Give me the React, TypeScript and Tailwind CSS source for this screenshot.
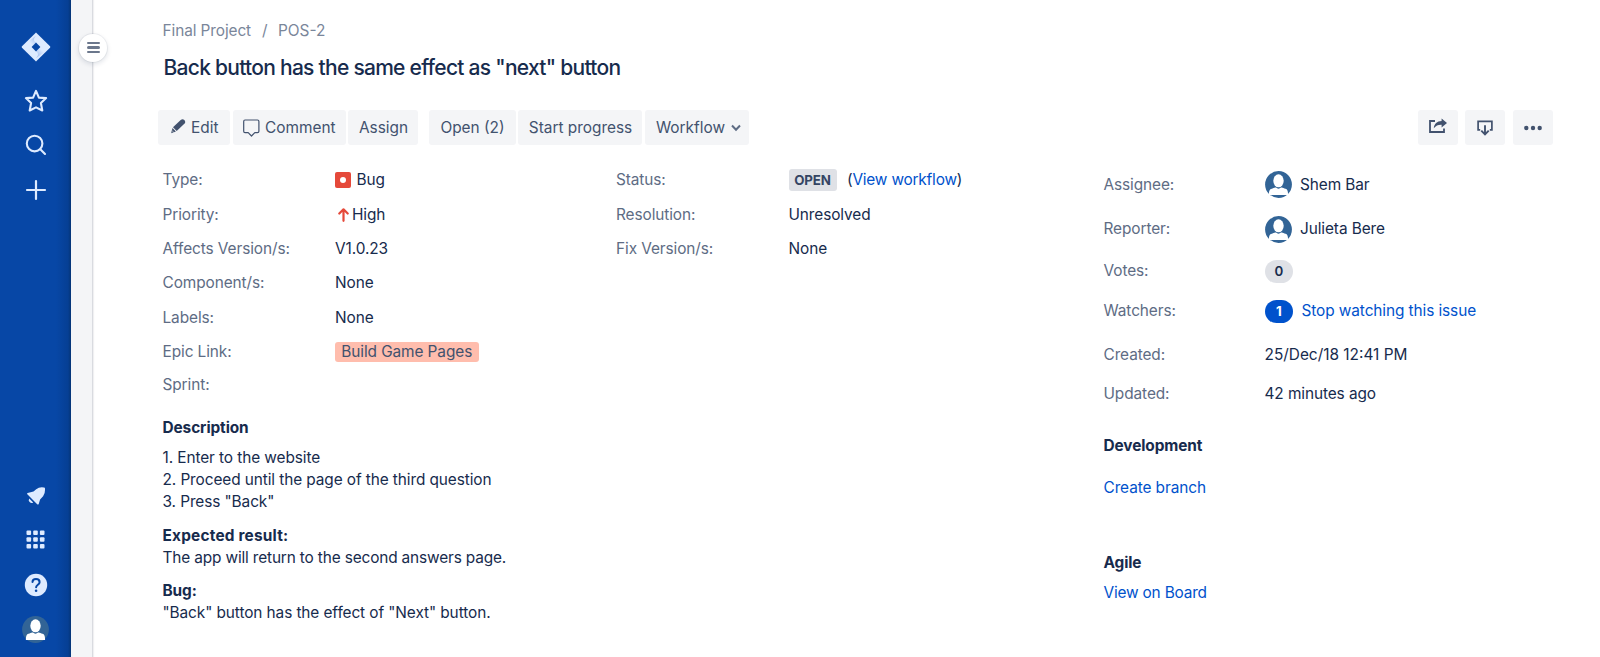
import type { ReactNode } from "react";

function JiraLogo() {
  return (
    <svg width="30" height="30" viewBox="0 0 30 30">
      <defs>
        <linearGradient id="upper" x1="17" y1="4" x2="9" y2="11" gradientUnits="userSpaceOnUse">
          <stop offset="0.15" stopColor="#9fbbec" />
          <stop offset="1" stopColor="#deebff" />
        </linearGradient>
        <linearGradient id="lower" x1="14" y1="26" x2="21" y2="18" gradientUnits="userSpaceOnUse">
          <stop offset="0.15" stopColor="#9fbbec" />
          <stop offset="1" stopColor="#deebff" />
        </linearGradient>
      </defs>
      <path d="M15 .5 29 14.2q.8.8 0 1.6L15 29.5 1 15.8q-.8-.8 0-1.6Z" fill="#deebff" />
      <path d="M15.300 3.500c-3 3-3 5.300-.3 7.300L9 16.800 6 10.500Z" fill="url(#upper)" />
      <path d="M14.700 26.500c3-3 3-5.300.3-7.300L21 13.200 24 19.500Z" fill="url(#lower)" />
      <path d="M15 10.600 10.600 15 15 19.400 19.400 15Z" fill="#0747a6" />
    </svg>
  );
}

function StarIcon() {
  return (
    <svg width="26" height="26" viewBox="0 0 26 26" fill="none" stroke="#deebff" strokeWidth="2.1" strokeLinejoin="round">
      <path d="M13 2.900 15.900 9.600 23.100 10.100 17.900 15 19.300 22.500 13 19.400 6.700 22.500 8.100 15 2.900 10.100 10.100 9.600Z" />
    </svg>
  );
}

function SearchIcon() {
  return (
    <svg width="22" height="22" viewBox="0 0 22 22" fill="none" stroke="#deebff" strokeWidth="2.1" strokeLinecap="round">
      <circle cx="9.600" cy="9.600" r="7.800" />
      <path d="m15.300 15.300 4.700 4.700" />
    </svg>
  );
}

function PlusIcon() {
  return (
    <svg width="22" height="22" viewBox="0 0 22 22" fill="none" stroke="#deebff" strokeWidth="2.2" strokeLinecap="round">
      <path d="M11 2v18M2 11h18" />
    </svg>
  );
}

function BellIcon() {
  return (
    <svg width="20" height="20" viewBox="0 0 20 20" fill="#deebff">
      <path d="M1.300 8.300 11.200 18.300q1 .8 1.500-.4l1.400-4.300 3-3.300q2-2.500 1.900-6.300V2.600q0-1-1-1.100-4.500-.9-7.800 1.700L7.500 5.500 1.600 7q-1 .5-.3 1.300Z" />
      <path d="M3.200 12.500 7.200 16.500A2.900 2.900 0 0 1 3.200 12.500Z" />
    </svg>
  );
}

function GridIcon() {
  return (
    <svg width="19" height="19" viewBox="0 0 19 19" fill="#deebff">
      {[0.5, 7.2, 13.9].map((y) =>
        [0.5, 7.2, 13.9].map((x) => <rect key={`${x}-${y}`} x={x} y={y} width="4.600" height="4.600" rx="1" />),
      )}
    </svg>
  );
}

function HelpIcon() {
  return (
    <svg width="24" height="24" viewBox="0 0 24 24" fill="none">
      <circle cx="12" cy="12" r="11.200" fill="#deebff" />
      <path d="M8.500 9.100C8.500 7 10.100 6 12 6s3.600 1.200 3.600 3.200c0 2.400-3.500 2.600-3.500 5" stroke="#0747a6" strokeWidth="2" strokeLinecap="round" />
      <circle cx="12.100" cy="17.800" r="1.300" fill="#0747a6" />
    </svg>
  );
}

function Avatar() {
  return (
    <svg width="27" height="27" viewBox="0 0 27 27" className="shrink-0">
      <circle cx="13.500" cy="13.500" r="13.400" fill="#326496" />
      <ellipse cx="13.500" cy="9.800" rx="5.200" ry="6.500" fill="#fff" />
      <path d="M3.900 24.100c0-4.500.8-6.300 3.600-6.700 1.600-.3 2.400-.8 3.300-.8.9 0 1.300 1.200 2.700 1.200s1.800-1.200 2.700-1.200c.9 0 1.700.5 3.300.8 2.800.4 3.600 2.200 3.600 6.700Z" fill="#fff" />
    </svg>
  );
}

function PencilIcon() {
  return (
    <svg width="15" height="15" viewBox="0 0 15 15" fill="#42526e">
      <path d="M9.700 1.100q1.900-1.600 3.600 0t.3 3.400L5.700 12 2 8.300Z" />
      <path d="M1.500 9.100 4.900 12.600.9 14.100Q.1 14.300.3 13.500Z" />
      <path d="m1.200 11.800 1.600 1.600" stroke="#f4f5f7" strokeWidth=".7" />
    </svg>
  );
}

function CommentIcon() {
  return (
    <svg width="17" height="18" viewBox="0 0 17 18" fill="none" stroke="#42526e" strokeWidth="1.200" strokeLinejoin="round">
      <path d="M2 1h12.500q1.400 0 1.400 1.400v9.800q0 1.400-1.400 1.400h-2.700L8.500 17 5.200 13.600H2Q.7 13.600.7 12.200V2.400Q.7 1 2 1Z" />
    </svg>
  );
}

function ChevronIcon() {
  return (
    <svg width="10" height="8" viewBox="0 0 10 8" fill="none" stroke="#5e6c84" strokeWidth="2">
      <path d="M1 1.500 5 5.700 9 1.500" />
    </svg>
  );
}

function ShareIcon() {
  return (
    <svg width="18" height="16" viewBox="0 0 18 16" fill="none">
      <path d="M6 3H1v11h14v-3.500" stroke="#42526e" strokeWidth="1.800" />
      <path d="M4.800 10.300C5.200 5.800 8 3.300 12.600 3.100V.4L18 4.900 12.600 9.400V6.700C9 6.600 7 7.600 4.800 10.300Z" fill="#42526e" />
    </svg>
  );
}

function ExportIcon() {
  return (
    <svg width="16" height="16" viewBox="0 0 16 16" fill="none" stroke="#42526e" strokeWidth="1.700">
      <path d="M3.200 9.900H1.100V1.400h13.800v8.500h-2.100" />
      <path d="M8 5.200v9M4.300 10.600 8 14.300l3.700-3.700" strokeWidth="1.900" />
    </svg>
  );
}

function DotsIcon() {
  return (
    <svg width="18" height="6" viewBox="0 0 18 6" fill="#42526e">
      <circle cx="2.300" cy="3" r="2.200" />
      <circle cx="9" cy="3" r="2.200" />
      <circle cx="15.700" cy="3" r="2.200" />
    </svg>
  );
}

function BugIcon() {
  return (
    <span className="mr-[6px] flex size-[15.500px] items-center justify-center rounded-[2px] bg-[#e5493a]">
      <span className="size-[6.500px] rounded-full bg-white" />
    </span>
  );
}

function ArrowUpIcon() {
  return (
    <svg width="11" height="14" viewBox="0 0 11 14" fill="none" stroke="#e5493a" strokeWidth="2.200" strokeLinecap="round" strokeLinejoin="round" className="mr-[3.500px] ml-[2.500px]">
      <path d="M5.500 12.800V1.500M1.300 5.500 5.500 1.300l4.200 4.200" />
    </svg>
  );
}

function NavItem({ height, children }: { height: string; children: ReactNode }) {
  return <div className={`flex w-full items-center justify-center ${height}`}>{children}</div>;
}

function Sidebar() {
  return (
    <nav className="flex h-full w-[71px] shrink-0 flex-col justify-between bg-[linear-gradient(to_right,#0747a6_0,#0747a6_56px,#063f94_68px,#053576_71px)]">
      <div className="flex flex-col pt-[24px]">
        <NavItem height="h-[45px]"><JiraLogo /></NavItem>
        <NavItem height="h-[64px]"><StarIcon /></NavItem>
        <NavItem height="h-[24px]"><SearchIcon /></NavItem>
        <NavItem height="h-[66px]"><PlusIcon /></NavItem>
      </div>
      <div className="flex flex-col pb-[6px]">
        <NavItem height="h-[43px]"><BellIcon /></NavItem>
        <NavItem height="h-[45px]"><GridIcon /></NavItem>
        <NavItem height="h-[45px]"><HelpIcon /></NavItem>
        <NavItem height="h-[44px]"><Avatar /></NavItem>
      </div>
    </nav>
  );
}

function Button({ width, children }: { width: string; children: ReactNode }) {
  return (
    <button className={`flex h-[35px] shrink-0 items-center justify-center rounded-[3px] bg-[#f4f5f7] whitespace-nowrap text-[#42526e] ${width}`}>
      {children}
    </button>
  );
}

function Toolbar() {
  return (
    <div className="flex w-[1395px] justify-between tracking-normal">
      <div className="flex gap-[2.500px]">
        <Button width="w-[72px] pl-[1.500px]"><span className="mr-[5px] mb-[3px]"><PencilIcon /></span>Edit</Button>
        <Button width="w-[113px] pl-px"><span className="mt-px mr-[4.500px]"><CommentIcon /></span>Comment</Button>
        <Button width="w-[70px] mr-[8px] pl-px">Assign</Button>
        <Button width="w-[87px] pl-px">Open (2)</Button>
        <Button width="w-[124px] pl-px">Start progress</Button>
        <Button width="w-[104.500px] pl-[3px]">Workflow<span className="ml-[5.500px]"><ChevronIcon /></span></Button>
      </div>
      <div className="flex">
        <Button width="w-[40px] mr-[6.500px] pb-[3px]"><ShareIcon /></Button>
        <Button width="w-[40px] mr-[8.500px]"><ExportIcon /></Button>
        <Button width="w-[40px]"><DotsIcon /></Button>
      </div>
    </div>
  );
}

function Row({ label, height = "h-[34.400px]", labelWidth = "w-[172.500px]", children }: { label: string; height?: string; labelWidth?: string; children?: ReactNode }) {
  return (
    <div className={`flex items-center ${height}`}>
      <dt className={`shrink-0 text-[#5e6c84] ${labelWidth}`}>{label}</dt>
      <dd className="flex items-center whitespace-nowrap">{children}</dd>
    </div>
  );
}

function Details() {
  return (
    <div className="flex pt-[18px]">
      <dl className="w-[453.500px]">
        <Row label="Type:"><BugIcon />Bug</Row>
        <Row label="Priority:"><ArrowUpIcon />High</Row>
        <Row label="Affects Version/s:">V1.0.23</Row>
        <Row label="Component/s:">None</Row>
        <Row label="Labels:">None</Row>
        <Row label="Epic Link:">
          <span className="flex h-[20px] w-[143.500px] items-center justify-center rounded-[3px] bg-[#ffbdad] text-[#42526e]">Build Game Pages</span>
        </Row>
        <Row label="Sprint:" height="h-[32px]" />
      </dl>
      <dl>
        <Row label="Status:">
          <span className="mr-[10.500px] flex h-[22px] w-[48px] items-center justify-center rounded-[3px] bg-[#dfe1e6] text-[13.300px] font-bold text-[#344563]">OPEN</span>
          <span className="tracking-[-0.2px]">(<a className="text-[#0052cc]">View workflow</a>)</span>
        </Row>
        <Row label="Resolution:">Unresolved</Row>
        <Row label="Fix Version/s:">None</Row>
      </dl>
    </div>
  );
}

function Description() {
  return (
    <section className="pt-[15.600px] leading-[22.200px]">
      <h2 className="mb-[7.800px] font-bold">Description</h2>
      <p>1. Enter to the website</p>
      <p>2. Proceed until the page of the third question</p>
      <p>3. Press "Back"</p>
      <p className="mt-[11px] font-bold tracking-[0.2px]">Expected result:</p>
      <p className="tracking-[-0.15px]">The app will return to the second answers page.</p>
      <p className="mt-[10.800px] font-bold">Bug:</p>
      <p>"Back" button has the effect of "Next" button.</p>
    </section>
  );
}

function People() {
  return (
    <aside className="w-[460px] shrink-0 pt-[17px]">
      <dl>
        <Row label="Assignee:" height="h-[45px]" labelWidth="w-[161px]"><Avatar /><span className="ml-[8.500px]">Shem Bar</span></Row>
        <Row label="Reporter:" height="h-[44px]" labelWidth="w-[161px]"><Avatar /><span className="ml-[8.500px]">Julieta Bere</span></Row>
        <Row label="Votes:" height="h-[40px]" labelWidth="w-[161px]">
          <span className="flex h-[23px] w-[28.500px] items-center justify-center rounded-full bg-[#dfe1e6] text-[13.300px] font-semibold">0</span>
        </Row>
        <Row label="Watchers:" height="h-[40px]" labelWidth="w-[161px]">
          <span className="flex h-[23px] w-[28.500px] items-center justify-center rounded-full bg-[#0052cc] text-[13.300px] font-bold text-white">1</span>
          <a className="ml-[8.500px] text-[#0052cc]">Stop watching this issue</a>
        </Row>
        <Row label="Created:" height="h-[47px]" labelWidth="w-[161px]"><span className="tracking-normal">25/Dec/18 12:41 PM</span></Row>
        <Row label="Updated:" height="h-[32px]" labelWidth="w-[161px]">42 minutes ago</Row>
      </dl>
      <section className="pt-[25px] leading-[22px]">
        <h2 className="font-bold">Development</h2>
        <a className="mt-[19.500px] block text-[#0052cc]">Create branch</a>
      </section>
      <section className="pt-[53px] leading-[22px]">
        <h2 className="font-bold">Agile</h2>
        <a className="mt-[8px] block tracking-[-0.18px] text-[#0052cc]">View on Board</a>
      </section>
    </aside>
  );
}

export default function App() {
  return (
    <div className="flex h-[657px] w-[1600px] overflow-hidden bg-white font-['Inter',sans-serif] text-[15.400px] leading-[22px] tracking-[-0.09px] text-[#172b4d]">
      <Sidebar />
      <div className="relative w-[22px] shrink-0 border-r border-[#d9dbe0] bg-[#f4f5f7] shadow-[1px_0_1px_#f0f0f2]">
        <button className="absolute top-[33.500px] left-[8.300px] flex size-[28px] flex-col items-center justify-center gap-[2.400px] rounded-full bg-white shadow-[0_0_0_1px_rgba(9,30,66,0.05),0_2px_4px_1px_rgba(9,30,66,0.10)]">
          <span className="h-[2.200px] w-[13px] rounded-full bg-[#6b778c]" />
          <span className="h-[2.200px] w-[13px] rounded-full bg-[#6b778c]" />
          <span className="h-[2.200px] w-[13px] rounded-full bg-[#6b778c]" />
        </button>
      </div>
      <main className="min-w-0 flex-1 pt-[20px] pl-[65px]">
        <div className="flex pl-[4.500px] text-[#7a869a]">
          <span className="w-[99.500px]">Final Project</span>
          <span className="w-[16px]">/</span>
          <span className="tracking-normal">POS-2</span>
        </div>
        <h1 className="mt-[12px] mb-[28px] pl-[5.500px] text-[21px] leading-[28px] font-medium tracking-[-0.725px]">Back button has the same effect as "next" button</h1>
        <Toolbar />
        <div className="flex pl-[4.500px]">
          <div className="w-[941px] shrink-0">
            <Details />
            <Description />
          </div>
          <People />
        </div>
      </main>
    </div>
  );
}
